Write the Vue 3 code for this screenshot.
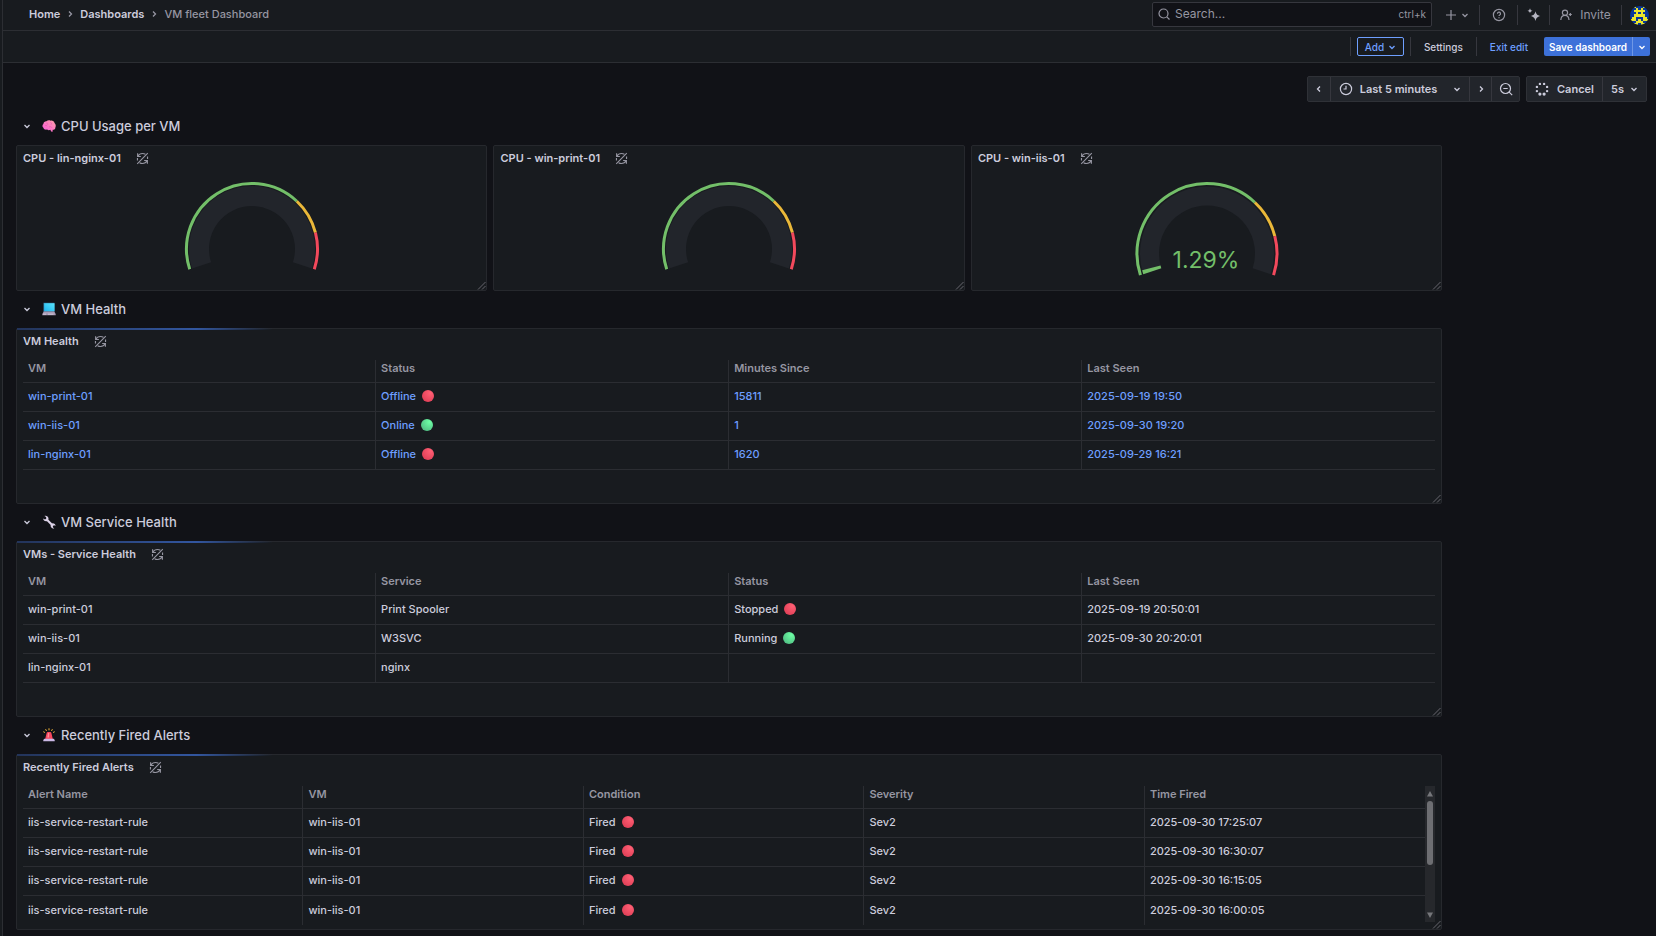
<script setup>
const refreshOff = 'M2 1.500v4h4M2.300 5.200C3.500 3 5.600 1.800 8 1.800c1.300 0 2.500.3 3.500 1M14 14.500v-4h-4M13.700 10.800C12.500 13 10.400 14.200 8 14.200c-1.300 0-2.500-.3-3.500-1M1.500 14.500l13-13M14.200 5.500v3M1.800 7.500v3'

const rad = (deg) => (deg * Math.PI) / 180
const START = 198
const SPAN = 216
const pointAt = (g, r, share) => {
  const a = rad(START - SPAN * share)
  return `${(75 + r * Math.cos(a)).toFixed(2)} ${(g.cy - r * Math.sin(a)).toFixed(2)}`
}
const arc = (g, r, from, to) => {
  const large = (to - from) * SPAN > 180 ? 1 : 0
  return `M${pointAt(g, r, from)}A${r} ${r} 0 ${large} 1 ${pointAt(g, r, to)}`
}
const gauges = [
  { title: 'CPU - lin-nginx-01', cy: 69, ring: 65.5, band: 53, width: 20 },
  { title: 'CPU - win-print-01', cy: 69, ring: 65.5, band: 53, width: 20 },
  { title: 'CPU - win-iis-01', cy: 73.5, ring: 70, band: 57.5, width: 19, value: 1.29 },
]

const dots = Array.from({ length: 8 }, (_, i) => ({
  x: 7 + 5.500 * Math.cos(rad(22.5 + i * 45)),
  y: 7 + 5.500 * Math.sin(rad(22.5 + i * 45)),
  r: i === 1 || i === 2 ? 1.600 : 1.200,
}))

const sections = [
  {
    id: 'health', icon: 'laptop', heading: 'VM Health', title: 'VM Health', links: true,
    cols: ['VM', 'Status', 'Minutes Since', 'Last Seen'],
    rows: [
      ['win-print-01', 'Offline|red', '15811', '2025-09-19 19:50'],
      ['win-iis-01', 'Online|green', '1', '2025-09-30 19:20'],
      ['lin-nginx-01', 'Offline|red', '1620', '2025-09-29 16:21'],
    ],
  },
  {
    id: 'service', icon: 'wrench', heading: 'VM Service Health', title: 'VMs - Service Health',
    cols: ['VM', 'Service', 'Status', 'Last Seen'],
    rows: [
      ['win-print-01', 'Print Spooler', 'Stopped|red', '2025-09-19 20:50:01'],
      ['win-iis-01', 'W3SVC', 'Running|green', '2025-09-30 20:20:01'],
      ['lin-nginx-01', 'nginx', '', ''],
    ],
  },
  {
    id: 'alerts', icon: 'siren', heading: 'Recently Fired Alerts', title: 'Recently Fired Alerts', scroll: true,
    cols: ['Alert Name', 'VM', 'Condition', 'Severity', 'Time Fired'],
    rows: ['17:25:07', '16:30:07', '16:15:05', '16:00:05'].map((t) => [
      'iis-service-restart-rule', 'win-iis-01', 'Fired|red', 'Sev2', `2025-09-30 ${t}`,
    ]),
  },
]

const avatar = [
  '..#...#..',
  '...#.#...',
  '..#####..',
  '...#.#...',
  '..#####..',
  '.##...##.',
  '###.#.###',
  '...###...',
  '..##.##..',
]
const pixels = avatar.flatMap((line, y) => [...line].map((c, x) => ({ c, x, y })).filter((p) => p.c === '#'))
</script>

<template>
  <div class="shell">
    <div class="rail"></div>
    <div class="page">
      <header class="topbar">
        <nav class="crumbs" aria-label="Breadcrumb">
          <a href="#">Home</a>
          <svg class="chev" viewBox="0 0 8 8"><path d="M3 1.500 5.500 4 3 6.500" /></svg>
          <a href="#">Dashboards</a>
          <svg class="chev" viewBox="0 0 8 8"><path d="M3 1.500 5.500 4 3 6.500" /></svg>
          <span>VM fleet Dashboard</span>
        </nav>
        <label class="search">
          <svg viewBox="0 0 12 12" class="i12"><circle cx="5.500" cy="5.500" r="4.500" /><path d="m8.800 8.800 2.700 2.700" /></svg>
          <input type="text" placeholder="Search..." aria-label="Search" />
          <kbd>ctrl+k</kbd>
        </label>
        <button class="tool new" aria-label="New">
          <svg viewBox="0 0 12 12" class="i12"><path d="M6 1v10M1 6h10" /></svg>
          <svg class="chev" viewBox="0 0 8 8"><path d="M1.500 3 4 5.500 6.500 3" /></svg>
        </button>
        <button class="tool help" aria-label="Help">
          <svg viewBox="0 0 14 14" class="i14"><circle cx="7" cy="7" r="5.600" /><path d="M5.500 5.700a1.500 1.500 0 1 1 2.200 1.300c-.5.300-.7.500-.7 1M7 9.300v1" /></svg>
        </button>
        <button class="tool spark" aria-label="Assistant">
          <svg viewBox="0 0 14 14" class="i14 solid"><path d="M8.500 3.200c.8 3 1.600 3.900 4.900 4.800-3.300.9-4.100 1.900-4.900 5-.8-3.100-1.600-4.100-4.900-5 3.300-.9 4.100-1.800 4.900-4.800ZM3 .2c.4 1.600.9 2.100 2.500 2.500C3.900 3.200 3.400 3.700 3 5.300 2.600 3.700 2.100 3.200.5 2.700 2.100 2.300 2.600 1.800 3 .2Z" /></svg>
        </button>
        <button class="tool invite">
          <svg viewBox="0 0 12 12" class="i12"><circle cx="5" cy="3.700" r="2.600" /><path d="M.8 11c.2-3 2-4.600 4.200-4.600S8.800 8 9 11M10.300 4v3M8.800 5.500h3" /></svg>
          Invite
        </button>
        <button class="avatar" aria-label="Profile">
          <svg viewBox="0 0 9 9" shape-rendering="crispEdges"><rect width="9" height="9" fill="#07369a" /><rect v-for="p in pixels" :key="p.x + '-' + p.y" :x="p.x" :y="p.y" width="1" height="1" fill="#e9e52c" /></svg>
        </button>
      </header>

      <div class="editbar">
        <div class="slot"><button class="btn outline">Add <svg class="chev" viewBox="0 0 8 8"><path d="M1.500 3 4 5.500 6.500 3" /></svg></button></div>
        <div class="slot"><button class="btn plain">Settings</button></div>
        <div class="slot"><button class="btn plain blue">Exit edit</button></div>
        <div class="save">
          <button class="btn primary">Save dashboard</button>
          <button class="btn primary more" aria-label="More save options"><svg class="chev" viewBox="0 0 8 8"><path d="M1.500 3 4 5.500 6.500 3" /></svg></button>
        </div>
      </div>

      <main>
        <div class="controls">
          <div class="group">
            <button class="narrow" aria-label="Back"><svg class="chev" viewBox="0 0 8 8"><path d="M5 1.500 2.500 4 5 6.500" /></svg></button>
            <button class="range">
              <svg viewBox="0 0 14 14" class="i14"><circle cx="7" cy="7" r="5.600" /><path d="M7 3.700V7H4.500" /></svg>
              <span>Last 5 minutes</span>
              <svg class="chev" viewBox="0 0 8 8"><path d="M1.500 3 4 5.500 6.500 3" /></svg>
            </button>
            <button class="narrow" aria-label="Forward"><svg class="chev" viewBox="0 0 8 8"><path d="M3 1.500 5.500 4 3 6.500" /></svg></button>
            <button class="zoom" aria-label="Zoom out"><svg viewBox="0 0 14 14" class="i14"><circle cx="6.500" cy="6.500" r="5" /><path d="m10.200 10.200 3 3M4.300 6.500h4.400" /></svg></button>
          </div>
          <div class="group">
            <button class="cancel">
              <svg viewBox="0 0 14 14" class="i14 solid"><circle v-for="(d, i) in dots" :key="i" :cx="d.x" :cy="d.y" :r="d.r" /></svg>
              <span>Cancel</span>
            </button>
            <button class="rate">5s <svg class="chev" viewBox="0 0 8 8"><path d="M1.500 3 4 5.500 6.500 3" /></svg></button>
          </div>
        </div>

        <div class="grid">
          <h2 class="row">
            <svg class="chev" viewBox="0 0 8 8"><path d="M1.500 3 4 5.500 6.500 3" /></svg>
            <svg class="emoji" viewBox="0 0 14 14">
              <defs><linearGradient id="brain" x1="1" y1="0" x2="0" y2="1"><stop offset="0" stop-color="#ffa0a8" /><stop offset="1" stop-color="#fb58da" /></linearGradient></defs>
              <path fill="url(#brain)" d="M4.500 2.300C5.500 1 7.500 1 8.500 1.700c2-.4 3.500.6 4 2.200 1.300 1.200 1.600 3 .9 4.400.1 1.700-1.300 2.700-2.700 2.500l-.1 1.900-1.500-.2-.7-1.800c-1.200.7-2.500.5-3.200-.2C3.500 11 1.600 10.300 1.400 8.700.1 7.900.2 5.900 1.400 5 1.500 3.300 3 2.200 4.500 2.300Z" />
              <path fill="none" stroke="#e34fae" stroke-width=".6" d="M5 3.500c-.5 1 .2 1.800 1.200 1.700M8.500 3.500c1 .2 1.200 1.300.6 2.100M3 6.500c.8-.5 1.800-.2 2 .7M7 8c1-.6 2.500-.3 3 .8" />
            </svg>
            <button>CPU Usage per VM</button>
          </h2>

          <section v-for="g in gauges" :key="g.title" class="panel third">
            <h3>{{ g.title }}<svg class="off" viewBox="0 0 16 16"><path :d="refreshOff" /></svg></h3>
            <svg class="gauge" viewBox="0 0 150 96">
              <path :d="arc(g, g.band, 0, 1)" :stroke-width="g.width" stroke="#22252b" />
              <path :d="arc(g, g.ring, 0, 0.7)" stroke="#73bf69" stroke-width="3" />
              <path :d="arc(g, g.ring, 0.7, 0.85)" stroke="#eab839" stroke-width="3" />
              <path :d="arc(g, g.ring, 0.85, 1)" stroke="#f2495c" stroke-width="3" />
              <template v-if="g.value">
                <path :d="arc(g, g.band, 0, 0.016)" :stroke-width="g.width" stroke="#73bf69" />
                <text x="74" y="88" text-anchor="middle">{{ g.value }}%</text>
              </template>
            </svg>
            <svg class="grip" viewBox="0 0 9 9"><path d="M1 8.500 8.500 1M5 8.500 8.500 5" /></svg>
          </section>

          <template v-for="s in sections" :key="s.id">
            <h2 class="row">
              <svg class="chev" viewBox="0 0 8 8"><path d="M1.500 3 4 5.500 6.500 3" /></svg>
              <svg v-if="s.icon === 'laptop'" class="emoji" viewBox="0 0 14 14">
                <defs><linearGradient id="screen" x1="0" y1="1" x2="1" y2="0"><stop offset="0" stop-color="#1fb4ee" /><stop offset="1" stop-color="#5ae4fb" /></linearGradient></defs>
                <path fill="#377fa8" d="M1.500.8h11v9h-11z" /><path fill="url(#screen)" d="M2.200 1.300h10.300v7.900H2.200z" />
                <path fill="#a99bb5" d="M1.700 9.400h10.600l1.400 2.600v1.300H.3V12z" /><path fill="#dcd3e4" d="M1 11.700h3v.9H1zM6 11.700h5.500v.9H6z" />
              </svg>
              <svg v-else-if="s.icon === 'wrench'" class="emoji" viewBox="0 0 14 14">
                <path fill="#ddd3e8" d="M1.200 3.500 3 4.500l1.200-.8-.1-1.600L2.500 1C4.300.5 6.300 1.500 6.500 3.400l-.1 1.300 3.800 3.700c1.700-.4 3.300.8 3.300 2.600l-1.400-.7-1.200.7.1 1.500 1.300.7c-1.800.7-3.700-.5-3.700-2.400l.1-.8L5 6.200C3 6.700 1.100 5.400 1.200 3.500Z" />
              </svg>
              <svg v-else class="emoji" viewBox="0 0 14 14">
                <path stroke="#f6b93b" stroke-width="1" d="M7 .3v2M3.600 1.200l.9 1.700M10.400 1.200l-.9 1.700M1.300 3.700l1.600.8M12.700 3.700l-1.600.8" />
                <path fill="#f8475e" d="M4.500 5.400Q4.700 4 6 4h2q1.300 0 1.500 1.400L10.800 11H3.200z" /><path fill="#ff8b97" d="M6 5h1.200L7 9.500H5.300z" />
                <path fill="#cbb8e5" d="M2.300 10.700h9.400l1 1.300v1.300H1.300V12z" />
              </svg>
              <button>{{ s.heading }}</button>
            </h2>
            <section class="panel wide">
              <div class="loading"></div>
              <h3>{{ s.title }}<svg class="off" viewBox="0 0 16 16"><path :d="refreshOff" /></svg></h3>
              <div class="body">
                <table :class="{ clipped: s.scroll }">
                  <thead><tr><th v-for="c in s.cols" :key="c" scope="col">{{ c }}</th></tr></thead>
                  <tbody>
                    <tr v-for="(r, i) in s.rows" :key="i">
                      <td v-for="(cell, j) in r" :key="j">
                        <component :is="s.links ? 'a' : 'span'" :href="s.links ? '#' : null" class="cell">{{ cell.split('|')[0] }}<i v-if="cell.includes('|')" class="dot" :class="cell.split('|')[1]"></i></component>
                      </td>
                    </tr>
                  </tbody>
                </table>
                <div v-if="s.scroll" class="scrollbar">
                  <svg viewBox="0 0 10 14"><path d="M5 5 8 10.500H2z" /></svg>
                  <div class="thumb"></div>
                  <svg viewBox="0 0 10 14"><path d="M5 10 8 4.500H2z" /></svg>
                </div>
              </div>
              <svg class="grip" viewBox="0 0 9 9"><path d="M1 8.500 8.500 1M5 8.500 8.500 5" /></svg>
            </section>
          </template>
        </div>
      </main>
    </div>
  </div>
</template>

<style>
body { margin: 0; background: #111217; }
</style>

<style scoped>
* { box-sizing: border-box; }
.shell { display: flex; min-height: 100vh; overflow: hidden; background: #111217; color: #ccccdc; font: 500 11px/16px Inter, "Liberation Sans", sans-serif; }
.rail { width: 3px; border-right: 1px solid #2c2e33; background: #181b1f; flex: none; }
.page { flex: 1; min-width: 0; }
a { color: inherit; text-decoration: none; }
button { border: 0; padding: 0; margin: 0; background: none; color: inherit; font: inherit; display: flex; align-items: center; white-space: nowrap; }
svg { fill: none; stroke: currentColor; stroke-width: 1.2; flex: none; display: block; }
.chev { width: 8px; height: 8px; stroke-width: 1.3; }
.i12 { width: 12px; height: 12px; }
.i14 { width: 14px; height: 14px; }
.solid { fill: currentColor; stroke: none; }

.topbar { height: 31px; display: flex; align-items: center; background: #181b1f; border-bottom: 1px solid #2c2e33; padding-right: 7px; color: #9696a2; }
.crumbs { display: flex; align-items: center; gap: 6px; margin: 0 auto 2px 26px; }
.crumbs a { color: #ccccdc; font-weight: 600; }
.search { display: flex; align-items: center; width: 280px; height: 25px; gap: 5px; padding: 0 5px; background: #111217; border: 1px solid #36373e; border-radius: 2px; margin: 0 5px 2px 0; }
.search input { flex: 1; min-width: 0; border: 0; outline: 0; padding: 0; background: none; color: #ccccdc; font: 400 12px/16px Inter, sans-serif; }
.search input::placeholder { color: #9696a2; opacity: 1; }
.search kbd { font: 400 10px/16px Inter, sans-serif; }
.tool { height: 20px; justify-content: center; border-right: 1px solid #36373e; }
.new { width: 43px; gap: 4px; padding-right: 3px; }
.help { width: 38px; }
.spark { width: 32px; color: #b4b4c0; }
.invite { width: 72px; gap: 8px; font-weight: 400; font-size: 12px; }
.avatar { width: 19px; height: 19px; border-radius: 50%; overflow: hidden; margin-left: 8px; }
.avatar svg { width: 19px; height: 19px; stroke: none; }

.editbar { height: 32px; display: flex; align-items: center; justify-content: flex-end; background: #181b1f; border-bottom: 1px solid #2c2e33; padding-right: 6px; font-size: 10px; }
.slot { height: 19px; display: flex; border-left: 1px solid #36373e; padding: 0 6px; }
.btn { height: 19px; border-radius: 2px; }
.outline { width: 47px; gap: 4px; justify-content: center; color: #6e9fff; border: 1px solid #6e9fff; }
.plain { padding: 0 7px; }
.blue { color: #6e9fff; }
.save { display: flex; margin-left: 3px; }
.primary { background: #3d71d9; color: #fff; padding: 0 5px; border-radius: 2px 0 0 2px; font-weight: 600; }
.more { width: 18px; padding: 0; justify-content: center; border-left: 1px solid #6f97e6; border-radius: 0 2px 2px 0; }

main { padding: 13px 9px 0 13px; }
.controls { display: flex; justify-content: flex-end; gap: 6px; font-weight: 600; }
.group { display: flex; height: 26px; background: #22252b; border: 1px solid #2f3137; border-radius: 2px; }
.group button { justify-content: center; }
.group button + button { border-left: 1px solid #36373e; }
.narrow { width: 22px; }
.range { width: 139px; gap: 7px; }
.range .chev { margin-left: 9px; }
.zoom { width: 28px; }
.cancel { width: 75px; gap: 8px; }
.rate { width: 44px; gap: 6px; }

.grid { display: grid; grid-template-columns: repeat(24, minmax(0, 1fr)); gap: 6px; margin-top: 12px; }
.row { grid-column: 1 / -1; height: 25px; margin: 0; padding: 0 0 2px 7px; display: flex; align-items: center; font-size: 13px; font-weight: 500; line-height: 20px; }
.emoji { width: 14px; height: 14px; margin: 0 5px 0 11px; stroke: none; }
.panel { position: relative; background: #181b1f; border: 1px solid #26282d; border-radius: 2px; }
.third { grid-column: span 7; height: 146px; }
.wide { grid-column: 1 / span 21; height: 176px; }
h3 { margin: 0; height: 24px; padding-left: 6px; display: flex; align-items: center; font-size: 11px; font-weight: 600; }
.off { width: 13px; height: 13px; margin-left: 15px; color: #9696a2; stroke-width: 1.4; }
.gauge { width: 150px; height: 96px; margin: 10px auto 0; }
.gauge text { font: 23px Inter, sans-serif; fill: #73bf69; stroke: none; }
.grip { position: absolute; right: 0; bottom: 0; width: 9px; height: 9px; color: #66676e; stroke-width: 1; }
.loading { position: absolute; left: 0; top: -1px; width: 18%; height: 2px; background: linear-gradient(90deg, #23345a, #32569f 70%, transparent); }
.body { display: flex; height: 144px; margin: 7px 6px 0; overflow: hidden; }
table { flex: 1; border-collapse: separate; border-spacing: 0; table-layout: fixed; width: 100%; height: max-content; }
th, td { height: 29px; padding: 0 0 2px 5px; text-align: left; border-bottom: 1px solid #2b2d32; border-right: 1px solid #2b2d32; }
th:last-child, td:last-child { border-right: 0; }
th { height: 23px; padding-bottom: 7px; line-height: 14px; color: #9696a2; font-weight: 600; }
.clipped tr:last-child td { border-bottom: 0; }
.cell { display: flex; align-items: center; }
a.cell { color: #6e9fff; }
.dot { width: 12px; height: 12px; border-radius: 50%; margin-left: 6px; }
.red { background: radial-gradient(circle at 70% 25%, #ff5f74, #d93850); }
.green { background: radial-gradient(circle at 70% 25%, #6dffa5, #4bb07c); }
.scrollbar { width: 10px; height: 136px; background: #26282c; display: flex; flex-direction: column; align-items: center; }
.scrollbar svg { width: 10px; height: 14px; fill: #75767a; stroke: none; }
.thumb { width: 6px; height: 64px; margin: 1px 0 auto; border-radius: 3px; background: #6d6e72; }
</style>
